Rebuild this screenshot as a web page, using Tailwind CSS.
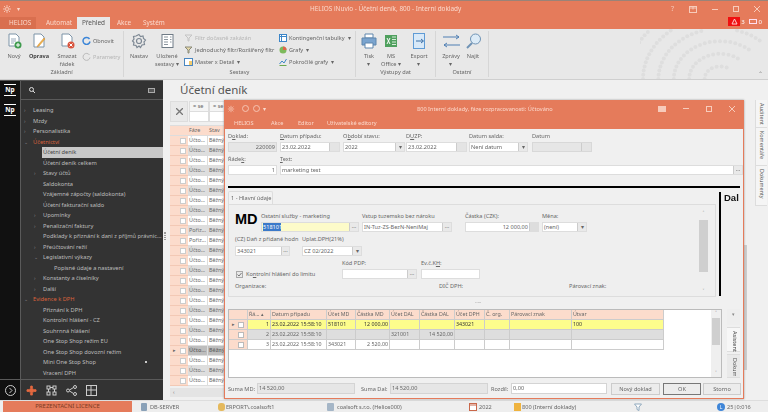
<!DOCTYPE html>
<html lang="cs">
<head>
    <meta charset="UTF-8">
    <title>HELIOS iNuvio - Účetní deník</title>
    <script src="https://cdn.jsdelivr.net/npm/@tailwindcss/browser@4"></script>
</head>
<body class="overflow-hidden bg-[#f0f0f0]">
<div class="relative w-[768px] h-[412px] overflow-hidden flex flex-col font-['Noto_Sans',sans-serif] text-[5.600px] leading-[8px] text-[#666] blur-[0.35px]">

    <!-- titulek + zalozky -->
    <div class="h-[29px] bg-[#e57b5b] border-t border-[#9a8378] flex flex-col text-[#fbd9cc]">
        <div class="h-[16px] flex items-center relative">
            <svg class="ml-[2px] w-[10px] h-[10px]" viewBox="0 0 10 10" fill="none" stroke="#f6c4b2" stroke-width="1"><circle cx="5" cy="5" r="1.500"/><path d="M5 1v2M5 7v2M1 5h2M7 5h2M2 2l1.500 1.500M8 2L6.500 3.500M2 8l1.500-1.500M8 8L6.500 6.500"/></svg>
            <span class="ml-[5px] text-[6px]">▾</span>
            <span class="ml-[290px] text-[6.400px]">HELIOS iNuvio - Účetní deník, 800 - Interní doklady</span>
            <div class="ml-auto mr-[8px] flex items-center gap-[15px] text-[#f7cbbb]">
                <span class="text-[7px]">?</span>
                <svg class="w-[8px] h-[7px]" viewBox="0 0 8 7" fill="none" stroke="#f7cbbb"><rect x=".5" y=".5" width="7" height="6"/><path d="M4 .5v3M.5 2h7"/></svg>
                <span class="w-[6px] h-px bg-[#f7cbbb]"></span>
                <span class="w-[6px] h-[6px] border border-[#f7cbbb]"></span>
                <svg class="w-[6px] h-[6px]" viewBox="0 0 6 6" stroke="#f7cbbb"><path d="M0 0l6 6M6 0L0 6"/></svg>
            </div>
        </div>
        <div class="h-[12px] flex items-end relative text-[6.400px]">
            <span class="w-[36px] h-[12px] bg-[#d96f4f] pl-[9px] leading-[12px]">HELIOS</span>
            <span class="ml-[10px] w-[31px] leading-[12px]">Automat</span>
            <span class="w-[33px] h-[12px] bg-[#e8e8e8] text-[#555] text-center leading-[12px]">Přehled</span>
            <span class="ml-[7px] w-[26px] leading-[12px]">Akce</span>
            <span class="leading-[12px]">Systém</span>
            <div class="absolute right-[6px] top-0 flex items-center gap-[1px] text-white text-[6px]">
                <span class="w-[12px] h-[9px] bg-[#f01010] flex items-center justify-center"><svg class="w-[7px] h-[7px]" viewBox="0 0 7 7" fill="none" stroke="#fcc"><path d="M3.500 1L6 6H1z"/></svg></span>
                <span class="mr-[3px]">3</span>
                <svg class="w-[8px] h-[6px]" viewBox="0 0 8 6" fill="none" stroke="#fde"><rect x=".5" y=".5" width="7" height="4"/></svg>
                <span class="ml-[1px]">0</span>
            </div>
        </div>
    </div>

    <!-- ribbon -->
    <div id="ribbon" class="h-[51px] bg-[#e8e8e8] border-b border-[#cfcfcf] flex relative">
        <!-- Zakladni -->
        <div class="w-[124px] border-r border-[#d6d6d6] my-[2px] flex flex-col">
            <div class="flex-1 flex pl-[5px]">
                <div class="w-[18px] flex flex-col items-center">
                    <svg class="w-[15px] h-[16px] mt-[2px]" viewBox="0 0 15 16"><path d="M2 1h7l3 3v9H2z" fill="#fff" stroke="#7d94a8"/><path d="M4 6h5M4 8h5M4 10h3" stroke="#9ab"/><circle cx="11" cy="12" r="3.500" fill="#3f9b4e"/><path d="M11 10v4M9 12h4" stroke="#fff"/></svg>
                    <span class="mt-[3px]">Nový</span>
                </div>
                <div class="ml-[5px] w-[22px] flex flex-col items-center">
                    <svg class="w-[15px] h-[16px] mt-[2px]" viewBox="0 0 15 16"><path d="M2 1h7l3 3v10H2z" fill="#fff" stroke="#7d94a8"/><path d="M13 6l-6 7-2 1 1-2 6-7z" fill="#efb44b" stroke="#d28b2e" stroke-width=".5"/></svg>
                    <span class="mt-[3px] font-bold text-[#444]">Oprava</span>
                </div>
                <div class="ml-[6px] w-[22px] flex flex-col items-center">
                    <svg class="w-[15px] h-[16px] mt-[2px]" viewBox="0 0 15 16"><path d="M2 1h7l3 3v9H2z" fill="#fff" stroke="#7d94a8"/><circle cx="11" cy="12" r="3.500" fill="#d9533c"/><path d="M9.500 10.500l3 3M12.500 10.500l-3 3" stroke="#fff"/></svg>
                    <span class="mt-[3px] text-center">Smazat<br>řádek</span>
                </div>
                <div class="ml-[4px] flex flex-col">
                    <div class="mt-[5px] flex items-center gap-[2px]"><svg class="w-[9px] h-[9px]" viewBox="0 0 9 9" fill="none" stroke="#3c86d8" stroke-width="1.500"><path d="M7.500 3A3.500 3.500 0 1 0 8 5.500"/></svg><span>Obnovit</span></div>
                    <div class="mt-[7px] flex items-center gap-[2px] text-[#b5b5b5]"><svg class="w-[9px] h-[9px]" viewBox="0 0 9 9" fill="none" stroke="#bbb"><path d="M7.500 3A3.500 3.500 0 1 0 8 5.500"/></svg><span>Parametry</span></div>
                </div>
            </div>
            <div class="text-center h-[9px]">Základní</div>
        </div>
        <!-- Sestavy -->
        <div class="w-[232px] border-r border-[#d6d6d6] my-[2px] flex flex-col">
            <div class="flex-1 flex">
                <div class="ml-[5px] w-[20px] flex flex-col items-center">
                    <svg class="w-[16px] h-[16px] mt-[2px]" viewBox="0 0 16 16" fill="none" stroke="#7d8894" stroke-width="1.200"><path d="M8 1.500l1.500 2 2.500-.5.500 2.500 2 1.500-1.500 2 .5 2.500-2.500.5L9.500 14.500 8 13l-2 1.500-1-2-2.500-.5.500-2.500L1.500 8 3 6 2.500 3.500 5 3z"/><circle cx="8" cy="8" r="2.500"/></svg>
                    <span class="mt-[3px]">Nastav</span>
                </div>
                <div class="ml-[6px] w-[24px] flex flex-col items-center">
                    <svg class="w-[15px] h-[16px] mt-[2px]" viewBox="0 0 15 16" fill="#fff" stroke="#6f7b86"><rect x="2" y="1.500" width="11" height="13"/><path d="M4 4h4M4 6.500h4M4 9h4M4 11.500h4M10 4h1.500M10 6.500h1.500M10 9h1.500" stroke-width=".8"/></svg>
                    <span class="mt-[3px] text-center whitespace-nowrap">Uložené<br>sestavy ▾</span>
                </div>
                <div class="ml-[5px] flex flex-col gap-[4px] pt-[3px] w-[94px] whitespace-nowrap">
                    <div class="flex items-center gap-[2px] h-[8px] text-[#b5b5b5]"><svg class="w-[9px] h-[8px]" viewBox="0 0 9 8" fill="none" stroke="#c4c4c4"><path d="M1 1h7L5 4v3H4V4z"/></svg>Filtr dočasně zakázán</div>
                    <div class="flex items-center gap-[2px] h-[8px]"><svg class="w-[9px] h-[8px]" viewBox="0 0 9 8" fill="#e6d9a8" stroke="#8a8a7a"><path d="M1 1h7L5 4v3H4V4z"/></svg>Jednoduchý filtr/Rozšířený filtr</div>
                    <div class="flex items-center gap-[2px] h-[8px]"><svg class="w-[9px] h-[8px]" viewBox="0 0 9 8" fill="#fff" stroke="#4a86c0"><rect x=".5" y=".5" width="8" height="7"/><path d="M5 3h3v4H5z" fill="#f1c96b" stroke="none"/></svg>Master x Detail &nbsp;▾</div>
                </div>
                <div class="ml-[1px] flex flex-col gap-[4px] pt-[3px] whitespace-nowrap">
                    <div class="flex items-center gap-[2px] h-[8px]"><svg class="w-[8px] h-[8px]" viewBox="0 0 8 8" fill="#fff" stroke="#3c86c8"><rect x=".5" y=".5" width="7" height="7"/><path d="M.5 2.500h7M2.500 .5v7"/></svg>Kontingenční tabulky &nbsp;▾</div>
                    <div class="flex items-center gap-[2px] h-[8px]"><svg class="w-[8px] h-[8px]" viewBox="0 0 8 8"><circle cx="4" cy="4" r="3.500" fill="#7dba5d"/><path d="M4 4V.5A3.500 3.500 0 0 1 7.500 4z" fill="#e2634a"/></svg>Grafy &nbsp;▾</div>
                    <div class="flex items-center gap-[2px] h-[8px]"><svg class="w-[8px] h-[8px]" viewBox="0 0 8 8" fill="none"><path d="M.5 6L3 3l2 2 2.500-4" stroke="#3c86c8"/><path d="M.5 7.500h7" stroke="#6aa84f"/></svg>Pokročilé grafy &nbsp;▾</div>
                </div>
            </div>
            <div class="text-center h-[9px]">Sestavy</div>
        </div>
        <!-- Vystupy dat -->
        <div class="w-[80px] border-r border-[#d6d6d6] my-[2px] flex flex-col">
            <div class="flex-1 flex">
                <div class="ml-[5px] w-[16px] flex flex-col items-center">
                    <svg class="w-[16px] h-[16px] mt-[2px]" viewBox="0 0 16 16"><path d="M4 1h8v4H4z" fill="#fff" stroke="#5f86ad"/><path d="M1 5h14v7H1z" fill="#7aa4cf" stroke="#5f86ad"/><path d="M4 10h8v5H4z" fill="#fff" stroke="#5f86ad"/></svg>
                    <span class="mt-[3px] text-center">Tisk<br>▾</span>
                </div>
                <div class="ml-[4px] w-[20px] flex flex-col items-center">
                    <svg class="w-[14px] h-[14px] mt-[3px]" viewBox="0 0 14 14"><rect x="1" y="1" width="12" height="12" fill="#4fa05e"/><path d="M3 4l3 6M6 4l-3 6" stroke="#fff"/><path d="M8 3h4M8 5.500h4M8 8h4M8 10.500h4" stroke="#d7ecd9"/></svg>
                    <span class="mt-[4px] text-center whitespace-nowrap">MS<br>Office ▾</span>
                </div>
                <div class="ml-[8px] w-[20px] flex flex-col items-center">
                    <svg class="w-[14px] h-[16px] mt-[2px]" viewBox="0 0 14 16"><rect x="1.500" y=".5" width="11" height="15" fill="#d8e9f8" stroke="#5f9bd5"/><path d="M4 8h7M9 6l2.500 2L9 10" stroke="#3b6ea5" fill="none"/></svg>
                    <span class="mt-[3px] text-center">Export<br>▾</span>
                </div>
            </div>
            <div class="text-center h-[9px]">Výstupy dat</div>
        </div>
        <!-- Ostatni -->
        <div class="w-[53px] border-r border-[#d6d6d6] my-[2px] flex flex-col">
            <div class="flex-1 flex">
                <div class="ml-[6px] w-[18px] flex flex-col items-center">
                    <svg class="w-[17px] h-[16px] mt-[2px]" viewBox="0 0 17 16" fill="none" stroke="#4f7fb3"><path d="M0 4h16M13 2l3 2-3 2M17 12H1M4 10l-3 2 3 2"/></svg>
                    <span class="mt-[3px] text-center">Zprávy<br>▾</span>
                </div>
                <div class="ml-[4px] w-[18px] flex flex-col items-center">
                    <svg class="w-[17px] h-[16px] mt-[2px]" viewBox="0 0 17 16" fill="#dcebf7" stroke="#6f93b5"><circle cx="10.500" cy="6" r="5"/><path d="M7 10l-5 5" stroke-width="2" fill="none"/></svg>
                    <span class="mt-[3px]">Najít</span>
                </div>
            </div>
            <div class="text-center h-[9px]">Ostatní</div>
        </div>
        <svg id="stars" class="absolute left-[640px] top-0 w-[128px] h-[50px]" viewBox="0 0 128 50"></svg>
        <span class="absolute right-[5px] bottom-[1px] text-[6px] text-[#888]">⌃</span>
    </div>

    <!-- stred -->
    <div class="flex-1 flex min-h-0">
        <div class="w-[163px] bg-[#333] flex flex-col text-[#bdbdbd] border-t border-[#555]">
            <div class="flex-1 flex min-h-0">
                <div class="w-[21px] bg-[#111] border-r border-[#5a5a5a] flex flex-col items-center pt-[3px] gap-[8px]">
                    <div class="w-[12px] h-[12px] border-y border-white text-white font-bold text-[6.500px] leading-[10px] text-center">Np</div>
                    <div class="w-[12px] h-[12px] border-y border-white text-white font-bold text-[6.500px] leading-[10px] text-center">Np</div>
                </div>
                <div class="flex-1 flex flex-col min-w-0">
                    <div class="h-[19px] border-b border-[#5a5a5a] flex items-center px-[8px] justify-between">
                        <svg class="w-[6px] h-[6px]" viewBox="0 0 6 6" fill="none" stroke="#ddd"><circle cx="2.500" cy="2.500" r="2"/><path d="M4 4l2 2"/></svg>
                        <span class="w-[7px] h-[5px] border border-[#aaa] bg-[#555]"></span>
                    </div>
                    <div id="tree" class="pt-[5px] text-[5.700px] whitespace-nowrap relative flex-1"></div>
                </div>
            </div>
            <div class="h-[21px] border-t border-[#5a5a5a] flex">
                <div class="w-[21px] bg-[#111] border-r border-[#5a5a5a] flex items-center justify-center">
                    <svg class="w-[11px] h-[11px]" viewBox="0 0 11 11" fill="none" stroke="#ccc"><circle cx="5.500" cy="5.500" r="5"/><path d="M4.500 3l2.500 2.500L4.500 8"/></svg>
                </div>
                <div class="flex items-center pl-[5px]">
                    <svg class="w-[11px] h-[11px]" viewBox="0 0 11 11" fill="#e4683f"><circle cx="5.500" cy="5.500" r="2.500"/><circle cx="2" cy="5.500" r="1.500"/><circle cx="9" cy="5.500" r="1.500"/><circle cx="5.500" cy="2" r="1.500"/><circle cx="5.500" cy="9" r="1.500"/></svg>
                    <svg class="ml-[9px] w-[11px] h-[11px]" viewBox="0 0 11 11" fill="none" stroke="#ccc"><rect x="1" y="1" width="3" height="3"/><rect x="7" y="1" width="3" height="3"/><rect x="1" y="7" width="3" height="3"/><rect x="7" y="7" width="3" height="3"/><path d="M2.500 4v3M8.500 4v3M4 2.500h3"/></svg>
                    <svg class="ml-[9px] w-[11px] h-[11px]" viewBox="0 0 11 11" fill="none" stroke="#ccc"><circle cx="2" cy="5.500" r="1.500"/><circle cx="9" cy="2" r="1.500"/><circle cx="9" cy="9" r="1.500"/><path d="M3.500 5l4-2.500M3.500 6l4 2.500"/></svg>
                    <svg class="ml-[9px] w-[11px] h-[11px]" viewBox="0 0 11 11" fill="none" stroke="#ccc"><rect x=".5" y=".5" width="10" height="10"/><path d="M.5 5h10M5 .5v10"/></svg>
                </div>
            </div>
        </div>

        <!-- pozadi s prehledem -->
        <div class="flex-1 relative flex flex-col pl-[7px] min-w-0 bg-[#f0f0f0]">
            <div class="h-[21px] pl-[10px] pt-[3px] text-[11.500px] leading-[14px] text-[#555]">Účetní deník</div>
            <div class="flex h-[21px]">
                <div class="w-[18px] bg-[#e9e9e9] border border-[#ddd] flex items-center justify-center">
                    <svg class="w-[7px] h-[7px]" viewBox="0 0 7 7" stroke="#777" stroke-width="1.300"><path d="M0 0l7 7M7 0L0 7"/></svg>
                </div>
                <div class="w-[20px] ml-px flex flex-col border border-[#ddd] bg-white"><span class="h-[10px] bg-[#f5f5f5] border-b border-[#ddd] pl-[3px] truncate">= se</span></div>
                <div class="w-[18px] flex flex-col border border-[#ddd] bg-white"><span class="h-[10px] bg-[#f5f5f5] border-b border-[#ddd] pl-[3px] truncate">= se</span></div>
            </div>
            <div id="bgrid" class="mt-[3px] w-[54px] flex flex-col text-[5.400px] leading-[9px] border-t border-[#ddd]"></div>
            <div class="mt-[2px] ml-0 w-[54px] h-[9px] bg-[#e4e4e4] text-[5px] pl-[3px] text-[#777]">‹</div>
            <div class="absolute left-[1px] top-[152px] w-[2px] h-[8px] border-x border-dotted border-[#999]"></div>
        </div>
    </div>

    <!-- stavovy radek -->
    <div class="h-[12px] bg-[#eee] border-t border-[#ddd] flex items-center whitespace-nowrap">
        <div class="ml-[3px] w-[129px] h-[11px] bg-[#e57b5b] text-[#7b3a22] text-[6px] text-center leading-[11px]">PREZENTAČNÍ LICENCE</div>
        <svg class="ml-[9px] w-[6px] h-[8px]" viewBox="0 0 6 8" fill="#8aa1b8"><rect width="6" height="8" rx="1"/></svg>
        <span class="ml-[3px] w-[68px]">DB-SERVER</span>
        <span class="w-[7px] h-[8px] bg-[#e5b95c] rounded-[3px]"></span>
        <span class="ml-[1px] w-[101px]">ERPORT\.coalsoft1</span>
        <svg class="w-[7px] h-[8px]" viewBox="0 0 7 8" fill="#a5b6c7"><rect width="7" height="8" rx="1"/></svg>
        <span class="ml-[3px] w-[132px]">coalsoft s.r.o. (Helios000)</span>
        <svg class="w-[8px] h-[8px]" viewBox="0 0 8 8" fill="#fff" stroke="#c9674a"><rect x=".5" y=".5" width="7" height="7"/><path d="M.5 2h7"/></svg>
        <span class="ml-[2px] w-[35px]">2022</span>
        <span class="w-[7px] h-[8px] bg-[#efb33f]"></span>
        <span class="ml-[1px] w-[112px]">800 (Interní doklady)</span>
        <svg class="w-[8px] h-[8px]" viewBox="0 0 8 8" fill="#fff" stroke="#8fa8bd"><path d="M.5 1h7L5 4v3.500L3 6.500V4z"/></svg>
        <span class="ml-[75px] w-[8px] h-[8px] rounded-full bg-[#3f86d8] text-white text-[5px] text-center leading-[8px]">L</span>
        <span class="ml-[2px]">25|0:016</span>
    </div>

    <!-- postranni zalozky -->
    <div class="absolute left-[755px] top-[100px] w-[12px] flex flex-col text-[5.400px] leading-[11px] text-[#555] bg-[#f5f5f5] border-l border-[#ddd]">
        <span class="h-[28px] pt-[3px] border-b border-[#ddd] [writing-mode:vertical-rl]">Auditent</span>
        <span class="h-[38px] pt-[3px] border-b border-[#ddd] [writing-mode:vertical-rl]">Komentáře</span>
        <span class="h-[40px] pt-[3px] border-b border-[#ddd] [writing-mode:vertical-rl]">Dokumenty</span>
    </div>
    <div class="absolute left-[744px] top-[245px] w-[3px] h-[125px] bg-[#ccc]"></div>

    <!-- okno dokladu -->
    <div class="absolute left-[224px] top-[100px] w-[520px] h-[299px] border border-[#e57b5b] bg-[#f0f0f0] flex flex-col shadow-[0_0_2px_#999]">
        <div class="h-[29px] bg-[#e57b5b] text-[#fbd9cc] flex flex-col shrink-0 -mt-px -mx-px">
            <div class="h-[17px] flex items-center relative">
                <svg class="ml-[3px] w-[8px] h-[8px]" viewBox="0 0 10 10" fill="none" stroke="#f6c4b2"><circle cx="5" cy="5" r="1.500"/><path d="M5 1v2M5 7v2M1 5h2M7 5h2M2 2l1.500 1.500M8 2L6.500 3.500M2 8l1.500-1.500M8 8L6.500 6.500"/></svg>
                <span class="ml-[7px] w-[7px] h-[7px] rounded-full border border-[#f6c4b2]"></span>
                <span class="ml-[4px] w-[7px] h-[7px] rounded-full border border-[#f6c4b2]"></span>
                <span class="ml-[3px]">▾</span>
                <span class="absolute left-[193px]">800 Interní doklady, fáze rozpracovanosti: Účtováno</span>
                <div class="ml-auto mr-[9px] flex items-center gap-[17px]">
                    <span class="w-[8px] h-[6px] bg-[#f7cbbb] border border-[#f7cbbb]"></span>
                    <span class="w-[6px] h-px bg-[#f7cbbb]"></span>
                    <span class="w-[6px] h-[6px] border border-[#f7cbbb]"></span>
                    <svg class="w-[6px] h-[6px]" viewBox="0 0 6 6" stroke="#f7cbbb"><path d="M0 0l6 6M6 0L0 6"/></svg>
                </div>
            </div>
            <div class="flex h-[12px] items-center">
                <span class="ml-[10px] w-[37px]">HELIOS</span>
                <span class="w-[27px]">Akce</span>
                <span class="w-[29px]">Editor</span>
                <span>Uživatelské editory</span>
            </div>
        </div>

        <div class="pl-[3px] flex flex-col flex-1 min-h-0">
            <!-- hlavicka -->
            <div class="flex mt-[3px] h-[20px]">
                <div class="w-[49px]"><div class="h-[9px]">D<u>o</u>klad:</div><div class="mt-px h-[10px] bg-[#e6e6e6] border border-[#d8d8d8] text-right pr-px leading-[8px]">220009</div></div>
                <div class="w-[60px] ml-[3px]"><div class="h-[9px]"><u>D</u>atum případu:</div><div class="mt-px h-[10px] bg-white border border-[#ddd] pl-px leading-[8px] flex justify-between">23.02.2022<span class="w-[10px] bg-[#e4e4e4] border-l border-[#ccc]"></span></div></div>
                <div class="w-[62px] ml-[3px]"><div class="h-[9px]">O<u>b</u>dobí stavu:</div><div class="mt-px h-[10px] bg-white border border-[#ddd] pl-px leading-[8px] flex justify-between">2022<span class="w-[9px] bg-[#e9e9e9] border-l border-[#ccc] text-center">▾</span></div></div>
                <div class="w-[61px] ml-px"><div class="h-[9px]">D<u>U</u>ZP:</div><div class="mt-px h-[10px] bg-white border border-[#ddd] pl-px leading-[8px] flex justify-between">23.02.2022<span class="w-[10px] bg-[#e4e4e4] border-l border-[#ccc]"></span></div></div>
                <div class="w-[59px] ml-[2px]"><div class="h-[9px]">Datum salda:</div><div class="mt-px h-[10px] bg-white border border-[#ddd] pl-px leading-[8px] flex justify-between">Není datum<span class="w-[9px] bg-[#e9e9e9] border-l border-[#ccc] text-center">▾</span></div></div>
                <div class="w-[60px] ml-[4px]"><div class="h-[9px]">Datum</div><div class="mt-px h-[10px] bg-[#e6e6e6] border border-[#d8d8d8] flex justify-end"><span class="w-[10px] bg-[#e4e4e4] border-l border-[#ccc]"></span></div></div>
            </div>
            <div class="flex mt-[3px] h-[20px]">
                <div class="w-[49px]"><div class="h-[9px]">Řáde<u>k</u>:</div><div class="mt-px h-[10px] bg-white border border-[#ddd] text-right pr-px leading-[8px]">1</div></div>
                <div class="w-[463px] ml-[3px]"><div class="h-[9px]"><u>T</u>ext:</div><div class="mt-px h-[10px] bg-white border border-[#ddd] pl-px leading-[8px] flex justify-between">marketing test<span class="w-[9px] bg-[#e9e9e9] border-l border-[#ccc] text-center leading-[6px]">...</span></div></div>
            </div>
            <div class="mt-[11px] h-[2px] w-[512px] bg-black shrink-0"></div>

            <!-- zalozka s ucty -->
            <div class="flex mt-[3px]">
                <div class="w-[488px]">
                    <div class="w-[45px] h-[13px] bg-[#f2f2f2] border border-b-0 border-[#ddd] rounded-t-[2px] pl-[2px] leading-[12px] whitespace-nowrap">1 - Hlavní údaje</div>
                    <div class="h-[93px] border border-[#ddd] bg-[#efefef] relative flex flex-col pl-[6px]">
                        <div class="flex pt-[7px] h-[27px]">
                            <span class="w-[26px] mt-[-4px] font-['Liberation_Sans',sans-serif] font-bold text-[14.500px] leading-[22px] text-black">MD</span>
                            <div class="w-[98px]"><div class="h-[9px] whitespace-nowrap">Ostatní služby - marketing</div><div class="mt-px h-[10px] flex border border-[#ddd] bg-[#fdfbc9] leading-[8px]"><span class="ml-px bg-[#3b79c9] text-white w-[18px] overflow-hidden">518101</span><span class="ml-auto w-[9px] bg-[#e9e9e9] border-l border-[#ccc] text-center leading-[6px]">...</span></div></div>
                            <div class="w-[90px] ml-[3px]"><div class="h-[9px] whitespace-nowrap">Vstup tuzemsko bez nároku</div><div class="mt-px h-[10px] flex border border-[#ddd] bg-white leading-[8px] pl-px whitespace-nowrap">IN-Tuz-ZS-BezN-NeniMaj<span class="ml-auto w-[9px] bg-[#e9e9e9] border-l border-[#ccc] text-center leading-[6px]">...</span></div></div>
                            <div class="w-[74px] ml-[13px]"><div class="h-[9px]">Částka (CZK):</div><div class="mt-px h-[10px] flex justify-end border border-[#ddd] bg-white leading-[8px]">12 000,00<span class="ml-px w-[9px] bg-[#ddd] border-l border-[#ccc]"></span></div></div>
                            <div class="w-[45px] ml-[3px]"><div class="h-[9px]">Měna:</div><div class="mt-px h-[10px] flex border border-[#ddd] bg-white leading-[8px] pl-px">(není)<span class="ml-auto w-[9px] bg-[#e9e9e9] border-l border-[#ccc] text-center">▾</span></div></div>
                        </div>
                        <div class="flex mt-[3px] h-[21px]">
                            <div class="w-[55px]"><div class="h-[9px] whitespace-nowrap">(CZ) Daň z přidané hodn</div><div class="mt-[2px] h-[10px] flex border border-[#ddd] bg-white leading-[8px] pl-px">343021<span class="ml-auto w-[8px] bg-[#e9e9e9] border-l border-[#ccc] text-center leading-[6px]">...</span></div></div>
                            <div class="w-[60px] ml-[12px]"><div class="h-[9px] whitespace-nowrap">Uplat.DPH(21%)</div><div class="mt-[2px] h-[10px] flex border border-[#ddd] bg-white leading-[8px] pl-px">CZ 02/2022<span class="ml-auto w-[9px] bg-[#e9e9e9] border-l border-[#ccc] text-center">▾</span></div></div>
                        </div>
                        <div class="flex mt-[3px] h-[20px]">
                            <div class="w-[107px] pt-[10px] flex items-center gap-[3px] whitespace-nowrap">
                                <svg class="ml-px w-[7px] h-[7px]" viewBox="0 0 7 7" fill="#e9e9e9" stroke="#aaa"><rect x=".5" y=".5" width="6" height="6"/><path d="M1.500 3.500l1.500 1.500 2.500-3" fill="none" stroke="#777"/></svg>
                                <span>Ko<u>n</u>trolní hlášení do limitu</span>
                            </div>
                            <div class="w-[75px]"><div class="h-[9px]">Kód PDP:</div><div class="mt-px h-[10px] flex border border-[#ddd] bg-white"><span class="ml-auto w-[9px] bg-[#e9e9e9] border-l border-[#ccc] text-center leading-[6px]">...</span></div></div>
                            <div class="w-[59px] ml-[4px]"><div class="h-[9px]">Ev.č.K<u>H</u>:</div><div class="mt-px h-[10px] border border-[#ddd] bg-white"></div></div>
                        </div>
                        <div class="flex mt-[3px]">
                            <span class="w-[204px]">Organizace:</span>
                            <span class="w-[130px]">DIČ DPH:</span>
                            <span>Párovací znak:</span>
                        </div>
                        <div class="absolute right-[7px] top-[1px] bottom-[1px] w-[9px] flex flex-col items-center text-[5px] leading-[8px] text-[#777]">
                            <span class="h-[14px] pt-[3px]">˄</span><span class="w-[9px] h-[52px] bg-[#cfcfcf]"></span><span class="mt-auto">˅</span>
                        </div>
                    </div>
                </div>
                <div class="ml-[3px] w-[2px] h-[104px] mt-px bg-black"></div>
                <span class="ml-[3px] font-['Liberation_Sans',sans-serif] font-bold text-[9.500px] leading-[14px] text-[#111]">Dal</span>
            </div>

            <div class="h-[12px] text-center text-[#999] leading-[10px] w-[500px] tracking-tighter">·····</div>

            <!-- polozky -->
            <div class="flex">
                <div class="w-[494px] h-[69px] bg-white border border-[#bbb] flex relative">
                    <div id="pgrid" class="grid grid-cols-[19px_23px_56px_29px_34px_30px_35px_30px_25px_62px_92px] auto-rows-[10px] content-start text-[5.300px] leading-[9px] whitespace-nowrap"></div>
                    <div class="absolute right-0 top-0 bottom-0 w-[10px] bg-[#efefef] flex flex-col items-center text-[5px] leading-[7px] text-[#777]">
                        <span class="h-[8px]">˄</span><span class="w-[8px] h-[27px] bg-[#cfcfcf]"></span><span class="mt-auto">˅</span>
                    </div>
                </div>
                <div class="ml-[5px] w-[13px] flex flex-col text-[5.400px] leading-[11px] text-[#555] gap-[2px]">
                    <span class="h-[16px] bg-[#eee] text-center leading-[10px] text-[#888]">▾</span>
                    <span class="h-[25px] pt-[3px] bg-[#f7f7f7] border-x border-[#ddd] font-medium [writing-mode:vertical-rl]">Asistent</span>
                    <span class="h-[24px] pt-[3px] bg-[#e9e9e9] border-x border-[#ddd] [writing-mode:vertical-rl]">Dokum</span>
                </div>
            </div>

            <!-- soucty -->
            <div class="flex items-center mt-[5px] h-[11px]">
                <span class="w-[29px] whitespace-nowrap">Suma MD:</span>
                <span class="w-[98px] h-[11px] bg-[#e6e6e6] border border-[#d4d4d4] pl-px leading-[9px]">14 520,00</span>
                <span class="ml-[6px] w-[29px] whitespace-nowrap">Suma Dal:</span>
                <span class="w-[98px] h-[11px] bg-[#e6e6e6] border border-[#d4d4d4] pl-px leading-[9px]">14 520,00</span>
                <span class="ml-[3px] w-[20px]">Rozdíl:</span>
                <span class="w-[96px] h-[11px] bg-white border border-[#d4d4d4] pl-px leading-[9px]">0,00</span>
                <span class="ml-[4px] w-[49px] h-[12px] bg-[#ececec] border border-[#ccc] text-center leading-[10px]">Nový doklad</span>
                <span class="ml-[3px] w-[38px] h-[12px] bg-[#ececec] border border-[#777] text-center leading-[10px]">OK</span>
                <span class="ml-[2px] w-[38px] h-[12px] bg-[#ececec] border border-[#ccc] text-center leading-[10px]">Storno</span>
            </div>
        </div>
    </div>
</div>

<script>
    // strom modulu
    const tree = [
        ['Leasing', 0, '›'], ['Mzdy', 0, '›'], ['Personalistika', 0, '›'], ['Účetnictví', 0, '⌄', 'o'],
        ['Účetní deník', 1, '', 's'], ['Účetní deník celkem', 1, ''], ['Stavy účtů', 1, '›'], ['Saldokonta', 1, ''],
        ['Vzájemné zápočty (saldokonta)', 1, ''], ['Účetní fakturační saldo', 1, ''], ['Upomínky', 1, '›'],
        ['Penalizační faktury', 1, '›'], ['Podklady k přiznání k dani z příjmů právnic...', 1, ''], ['Přeúčtování režií', 1, '›'],
        ['Legislativní výkazy', 1, '⌄'], ['Popisné údaje a nastavení', 2, ''], ['Konstanty a číselníky', 1, '›'], ['Další', 1, '›'],
        ['Evidence k DPH', 0, '⌄', 'o'], ['Přiznání k DPH', 1, ''], ['Kontrolní hlášení - CZ', 1, ''], ['Souhrnná hlášení', 1, ''],
        ['One Stop Shop režim EU', 1, ''], ['One Stop Shop dovozní režim', 1, ''], ['Mini One Stop Shop', 1, ''], ['Vracení DPH', 1, '']
    ];
    const left = ['pl-[11px]', 'pl-[21px]', 'pl-[32px]'];
    document.getElementById('tree').innerHTML = tree.map(([t, lvl, arrow, kind]) => {
        const color = kind === 'o' ? 'text-[#d9623c]' : '';
        const label = kind === 's'
            ? `<span class="flex-1 h-[11px] leading-[11px] bg-[#c8c8c8] text-[#444] pl-[1px]">${t}</span>`
            : `<span class="${color} pl-[1px]">${t}</span>`;
        return `<div class="h-[10.500px] leading-[10.500px] flex ${left[lvl]} relative"><span class="absolute ml-[-8px] text-[#888] text-[5px]">${arrow}</span>${label}</div>`;
    }).join('') + '<span class="absolute left-[124px] top-[261px] w-[2px] h-[2px] bg-white rounded-full"></span>';

    // prehled za oknem
    let rows = `<div class="flex h-[10px] bg-[#fcdccc] border-b border-[#ddd]"><span class="w-[18px]"></span><span class="w-[20px] pl-px">Fáze</span><span class="w-[16px] pl-px">Stav</span></div>`;
    for (let i = 1; i <= 25; i++) {
        let bg = i % 2 ? 'bg-white' : 'bg-[#dedede]';
        if (i === 22) bg = 'bg-[#bdbdbd] font-semibold';
        const faze = i === 10 || i === 11 ? 'Pořiz...' : 'Účto...';
        const arrow = i === 22 ? '▸' : '';
        rows += `<div class="flex h-[10px]"><span class="w-[18px] bg-[#fcdccc] border-b border-[#f3c9b5] flex items-center justify-end pr-[2px] text-[5px]"><span class="mr-auto pl-[3px]">${arrow}</span><span class="w-[6px] h-[6px] bg-white border border-[#ccc]"></span></span><span class="w-[20px] ${bg} border-r border-b border-[#ddd] pl-px overflow-hidden">${faze}</span><span class="w-[16px] ${bg} border-b border-[#ddd] pl-px overflow-hidden whitespace-nowrap">Běžný</span></div>`;
    }
    document.getElementById('bgrid').innerHTML = rows;

    // polozky dokladu
    const head = ['', 'Řá... ▴', 'Datum případu', 'Účet MD', 'Částka MD', 'Účet DAL', 'Částka DAL', 'Účet DPH', 'Č. org.', 'Párovací znak', 'Útvar'];
    const data = [
        ['1', '23.02.2022 15:58:10', '518101', '12 000,00', '', '', '343021', '', '', '100'],
        ['2', '23.02.2022 15:58:10', '', '', '321001', '14 520,00', '', '', '', ''],
        ['3', '23.02.2022 15:58:10', '343021', '2 520,00', '', '', '', '', '', '']
    ];
    const rowBg = ['bg-[#fdfd8c] text-[#333]', 'bg-[#dedede]', 'bg-white'];
    const rightCols = [0, 3, 5];
    let cells = head.map(h => `<div class="bg-[#fcdccc] border-r border-b border-[#ccc] pl-px overflow-hidden">${h}</div>`).join('');
    data.forEach((row, r) => {
        cells += `<div class="bg-[#fcdccc] border-r border-b border-[#ccc] flex items-center justify-end pr-[3px]"><span class="mr-auto pl-[3px] text-[5px]">${r === 0 ? '▸' : ''}</span><span class="w-[6px] h-[6px] bg-white border border-[#bbb]"></span></div>`;
        row.forEach((v, c) => {
            const al = rightCols.includes(c) ? 'text-right pr-px' : 'pl-px';
            cells += `<div class="${rowBg[r]} ${al} border-r border-b border-[#ccc] overflow-hidden">${v}</div>`;
        });
    });
    document.getElementById('pgrid').innerHTML = cells;

    // hvezdicky v pozadi ribbonu
    let stars = '';
    for (let ring = 1; ring < 7; ring++) {
        const r = ring * 14;
        const n = ring * 7;
        for (let k = 0; k < n; k++) {
            const a = Math.PI + (k / n) * Math.PI * 0.75;
            const x = 80 + Math.cos(a) * r * 1.1;
            const y = 50 + Math.sin(a) * r * 0.9;
            if (y > 1) stars += `<circle cx="${x.toFixed(1)}" cy="${y.toFixed(1)}" r="2" fill="#dedede"/>`;
        }
    }
    document.getElementById('stars').innerHTML = stars;
</script>
</body>
</html>
